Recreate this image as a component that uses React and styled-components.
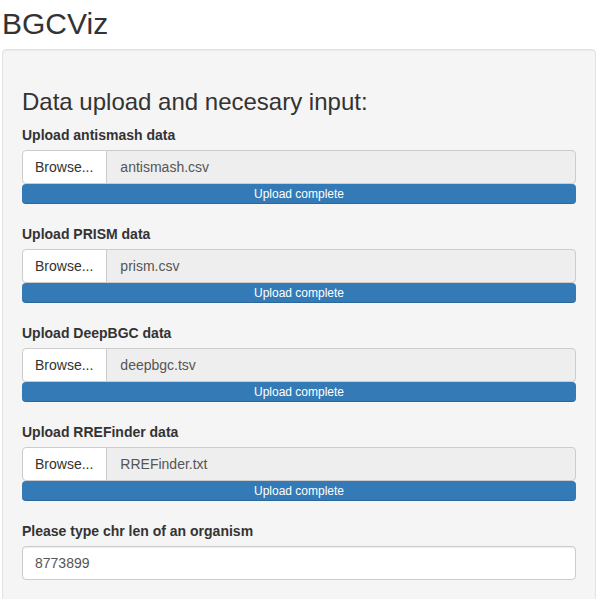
import React from "react";
import styled, { createGlobalStyle } from "styled-components";

const uploads = [
  { label: "Upload antismash data", file: "antismash.csv" },
  { label: "Upload PRISM data", file: "prism.csv" },
  { label: "Upload DeepBGC data", file: "deepbgc.tsv" },
  { label: "Upload RREFinder data", file: "RREFinder.txt" },
];

const App = () => {
  return (
    <Page>
      <GlobalStyle />
      <Title>BGCViz</Title>
      <Well>
        <Heading>Data upload and necesary input:</Heading>
        {uploads.map(item => (
          <FormGroup key={item.label}>
            <Label>{item.label}</Label>
            <InputGroup>
              <BrowseButton>Browse...</BrowseButton>
              <FileName>{item.file}</FileName>
            </InputGroup>
            <Progress>Upload complete</Progress>
          </FormGroup>
        ))}
        <FormGroup>
          <Label>Please type chr len of an organism</Label>
          <TextInput type="text" defaultValue="8773899" />
        </FormGroup>
      </Well>
    </Page>
  );
};

export default App;

const GlobalStyle = createGlobalStyle`
  html, body {
    margin: 0;
    padding: 0;
    overflow: hidden;
    background: #fff;
  }
  * {
    box-sizing: border-box;
  }
`;

const Page = styled.div`
  font-family: "Liberation Sans", Arial, Helvetica, sans-serif;
  font-size: 14px;
  line-height: 1.42857;
  color: #333;
  padding-left: 2px;
  width: 596px;
`;

const Title = styled.h2`
  font-size: 30px;
  font-weight: 400;
  line-height: 1.1;
  margin: 7px 0 9px 0;
`;

const Well = styled.div`
  background: #f5f5f5;
  border: 1px solid #e3e3e3;
  border-radius: 4px;
  box-shadow: inset 0 1px 1px rgba(0, 0, 0, 0.05);
  padding: 19px;
  min-height: 600px;
`;

const Heading = styled.h3`
  font-size: 24px;
  font-weight: 400;
  line-height: 1.1;
  margin: 20px 0 10px 0;
`;

const FormGroup = styled.div`
  margin-bottom: 0;
`;

const Label = styled.label`
  display: block;
  font-weight: 700;
  margin-bottom: 5px;
  padding-top: 1px;
  line-height: 19px;
`;

const InputGroup = styled.div`
  display: flex;
  height: 34px;
`;

const BrowseButton = styled.span`
  display: flex;
  align-items: center;
  padding: 7px 13px 5px 12px;
  background: #fff;
  color: #333;
  border: 1px solid #ccc;
  border-radius: 4px 0 0 4px;
  white-space: nowrap;
`;

const FileName = styled.div`
  flex: 1;
  display: flex;
  align-items: center;
  padding: 7px 12px 5px 13px;
  margin-left: -1px;
  background: #eee;
  color: #555;
  border: 1px solid #ccc;
  border-radius: 0 4px 4px 0;
`;

const Progress = styled.div`
  height: 20px;
  margin-bottom: 20px;
  background: #337ab7;
  border-radius: 4px;
  color: #fff;
  font-size: 12px;
  line-height: 20px;
  text-align: center;
  box-shadow: inset 0 -1px 0 rgba(0, 0, 0, 0.15);
`;

const TextInput = styled.input`
  display: block;
  width: 100%;
  height: 34px;
  padding: 6px 12px;
  font-family: inherit;
  font-size: 14px;
  color: #555;
  background: #fff;
  border: 1px solid #ccc;
  border-radius: 4px;
  box-shadow: inset 0 1px 1px rgba(0, 0, 0, 0.075);
  outline: none;
`;
